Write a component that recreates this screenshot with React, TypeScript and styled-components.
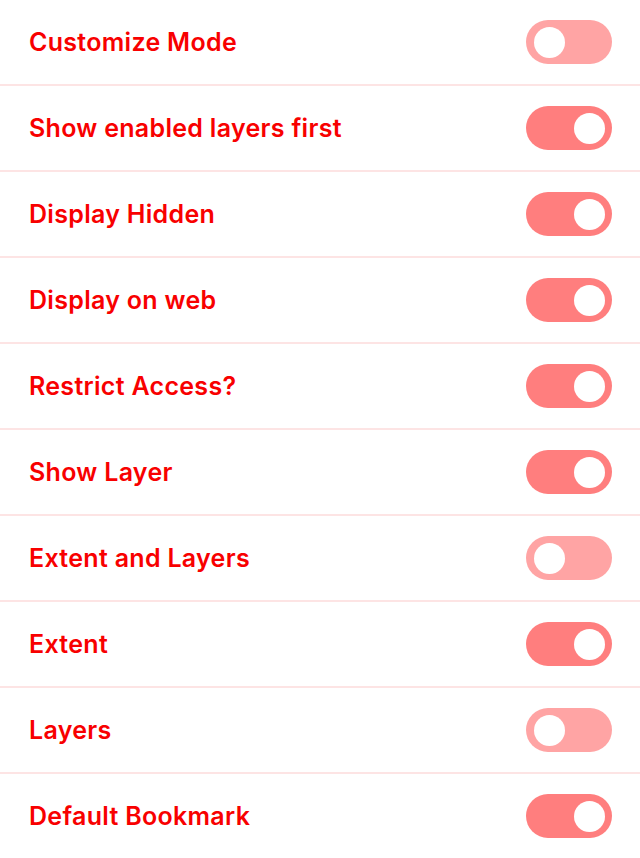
import styled, { createGlobalStyle } from "styled-components";

const GlobalStyle = createGlobalStyle`
    body {
        margin: 0;
        background: #fff;
        font-family: "Inter", "Liberation Sans", sans-serif;
    }
`

const List = styled.div`
    width: 640px;
    display: flex;
    flex-direction: column;
`

const Row = styled.div`
    height: 84px;
    padding: 0 28px 0 29px;
    display: flex;
    align-items: center;
    justify-content: space-between;
    border-bottom: 2px solid #fde4e4;
`

const Label = styled.span`
    color: #f80000;
    font-size: 25px;
    font-weight: 600;
    letter-spacing: 0.3px;
    margin-top: -1px;
`

const Track = styled.div<{ $on: boolean }>`
    width: 86px;
    height: 44px;
    border-radius: 22px;
    background: ${p => (p.$on ? "#ff7e7e" : "#ffa4a4")};
    display: flex;
    align-items: center;
    justify-content: ${p => (p.$on ? "flex-end" : "flex-start")};
    padding: 0 7px 0 8px;
    box-sizing: border-box;
`

const Knob = styled.div`
    width: 31px;
    height: 31px;
    border-radius: 50%;
    background: #fff;
`

const items: [string, boolean][] = [
    ["Customize Mode", false],
    ["Show enabled layers first", true],
    ["Display Hidden", true],
    ["Display on web", true],
    ["Restrict Access?", true],
    ["Show Layer", true],
    ["Extent and Layers", false],
    ["Extent", true],
    ["Layers", false],
    ["Default Bookmark", true],
]

export default function App() {
    return (
        <>
            <GlobalStyle />
            <List>
                {items.map(([label, on]) => (
                    <Row key={label}>
                        <Label>{label}</Label>
                        <Track $on={on}>
                            <Knob />
                        </Track>
                    </Row>
                ))}
            </List>
        </>
    )
}
